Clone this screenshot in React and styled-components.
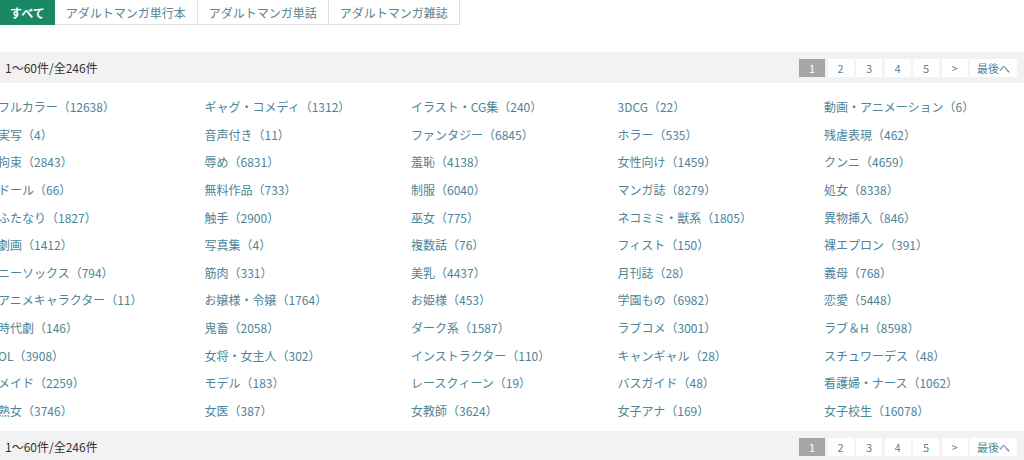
import React from 'react';
import styled, { createGlobalStyle } from 'styled-components';

const GlobalStyle = createGlobalStyle`
  body {
    margin: 0;
    background: #fff;
    font-family: "Noto Sans CJK JP", "Noto Sans", sans-serif;
    font-size: 12px;
    color: #333;
  }
`;

const Page = styled.div`
  width: 1024px;
  overflow: hidden;
`;

const Tabs = styled.ul`
  display: flex;
  margin: 0;
  padding: 0;
  list-style: none;
  height: 25px;
`;

const Tab = styled.li`
  display: flex;
  align-items: center;
  height: 24px;
  padding: ${(p) => (p.active ? '0 9px' : '0 11px')};
  background: ${(p) => (p.active ? '#1a8865' : '#fff')};
  color: ${(p) => (p.active ? '#fff' : '#55859a')};
  font-weight: ${(p) => (p.active ? 'bold' : 'normal')};
  border: 1px solid ${(p) => (p.active ? '#1a8865' : '#dfdfdf')};
  border-left: ${(p) => (p.active ? '1px solid #1a8865' : 'none')};
  border-top: none;
  white-space: nowrap;
`;

const Bar = styled.div`
  display: flex;
  align-items: center;
  justify-content: space-between;
  height: 31px;
  padding: 0 7px 0 5px;
  background: #f2f2f2;
  margin-top: ${(p) => p.top || 0}px;
`;

const Count = styled.span`
  color: #333;
`;

const Pager = styled.div`
  display: flex;
  gap: 2.5px;
`;

const PageBox = styled.span`
  display: flex;
  align-items: center;
  justify-content: center;
  height: 18px;
  min-width: 26px;
  padding: ${(p) => (p.wide ? '0 7px' : '0')};
  box-sizing: border-box;
  font-size: 11px;
  background: ${(p) => (p.active ? '#a6a6a6' : '#fff')};
  color: ${(p) => (p.active ? '#fff' : '#55859a')};
`;

const Grid = styled.ul`
  display: grid;
  grid-template-columns: repeat(5, 206.5px);
  grid-auto-rows: 27.6px;
  margin: 0 0 0 -2px;
  padding: 10px 0 7px;
  list-style: none;
`;

const Item = styled.li`
  display: flex;
  align-items: center;
  color: #4d8499;
  white-space: nowrap;
`;

const genres = [
  'フルカラー（12638）', 'ギャグ・コメディ（1312）', 'イラスト・CG集（240）', '3DCG（22）', '動画・アニメーション（6）',
  '実写（4）', '音声付き（11）', 'ファンタジー（6845）', 'ホラー（535）', '残虐表現（462）',
  '拘束（2843）', '辱め（6831）', '羞恥（4138）', '女性向け（1459）', 'クンニ（4659）',
  'ドール（66）', '無料作品（733）', '制服（6040）', 'マンガ誌（8279）', '処女（8338）',
  'ふたなり（1827）', '触手（2900）', '巫女（775）', 'ネコミミ・獣系（1805）', '異物挿入（846）',
  '劇画（1412）', '写真集（4）', '複数話（76）', 'フィスト（150）', '裸エプロン（391）',
  'ニーソックス（794）', '筋肉（331）', '美乳（4437）', '月刊誌（28）', '義母（768）',
  'アニメキャラクター（11）', 'お嬢様・令嬢（1764）', 'お姫様（453）', '学園もの（6982）', '恋愛（5448）',
  '時代劇（146）', '鬼畜（2058）', 'ダーク系（1587）', 'ラブコメ（3001）', 'ラブ＆H（8598）',
  'OL（3908）', '女将・女主人（302）', 'インストラクター（110）', 'キャンギャル（28）', 'スチュワーデス（48）',
  'メイド（2259）', 'モデル（183）', 'レースクィーン（19）', 'バスガイド（48）', '看護婦・ナース（1062）',
  '熟女（3746）', '女医（387）', '女教師（3624）', '女子アナ（169）', '女子校生（16078）',
];

const tabs = ['すべて', 'アダルトマンガ単行本', 'アダルトマンガ単話', 'アダルトマンガ雑誌'];

const Pagination = ({ top }) => (
  <Bar top={top}>
    <Count>1〜60件/全246件</Count>
    <Pager>
      <PageBox active>1</PageBox>
      <PageBox>2</PageBox>
      <PageBox>3</PageBox>
      <PageBox>4</PageBox>
      <PageBox>5</PageBox>
      <PageBox>&gt;</PageBox>
      <PageBox wide>最後へ</PageBox>
    </Pager>
  </Bar>
);

const App = () => (
  <Page>
    <GlobalStyle />
    <Tabs>
      {tabs.map((t, i) => (
        <Tab key={t} active={i === 0}>{t}</Tab>
      ))}
    </Tabs>
    <Pagination top={27} />
    <Grid>
      {genres.map((g) => (
        <Item key={g}>{g}</Item>
      ))}
    </Grid>
    <Pagination />
  </Page>
);

export default App;
